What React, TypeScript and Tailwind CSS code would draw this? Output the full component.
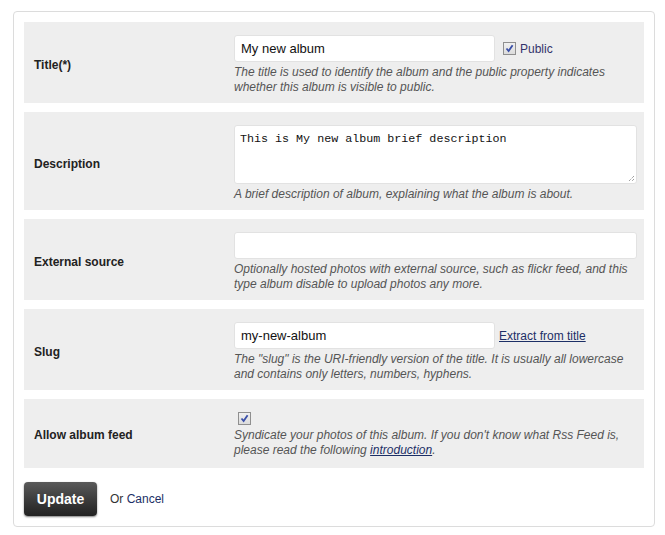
import React from "react";

function Check() {
  return (
    <span className="inline-flex h-[13px] w-[13px] shrink-0 items-center justify-center border border-[#8f8f8f] bg-gradient-to-b from-[#f0f0f0] to-[#dcdcdc]">
      <svg width="9" height="9" viewBox="0 0 9 9">
        <path d="M1.5 4.5 L3.6 7 L7.6 1.2" fill="none" stroke="#3a4fa8" strokeWidth="1.8" />
      </svg>
    </span>
  );
}

function Row({ label, children, last }: { label: string; children: React.ReactNode; last?: boolean }) {
  return (
    <div className={last ? "flex items-center bg-[#eeeeee] pt-[13px] pb-[10px]" : "flex items-center bg-[#eeeeee] pt-[13px] pb-[8px]"}>
      <div className="w-[210px] shrink-0 pl-[10px] text-[12px] font-bold text-[#222]">{label}</div>
      <div className="w-[403px]">{children}</div>
    </div>
  );
}

function Help({ children }: { children: React.ReactNode }) {
  return <div className="mt-[3px] text-[12px] italic leading-[15px] text-[#555]">{children}</div>;
}

export default function App() {
  return (
    <div className="min-h-[535px] bg-white pt-[11px] pl-[13px]" style={{ fontFamily: '"Liberation Sans", Arial, sans-serif' }}>
      <div className="w-[642px] rounded-[4px] border border-[#dcdcdc] p-[10px]">
        <div className="flex flex-col gap-[9px]">
          <Row label="Title(*)">
            <div className="flex items-center">
              <div className="flex h-[27px] w-[261px] items-center rounded-[3px] border border-[#e2e2e2] bg-white px-[6px] text-[13px] text-[#111]">
                My new album
              </div>
              <span className="ml-[8px] flex items-center gap-[4px] text-[12px] text-[#33336b]">
                <Check />
                Public
              </span>
            </div>
            <Help>
              The title is used to identify the album and the public property indicates whether this album is visible to public.
            </Help>
          </Row>
          <Row label="Description">
            <div className="relative h-[59px] w-[403px] rounded-[3px] border border-[#e2e2e2] bg-white px-[5px] pt-[5px] text-[11.7px] text-[#111]" style={{ fontFamily: '"Liberation Mono", "DejaVu Sans Mono", monospace' }}>
              This is My new album brief description
              <svg className="absolute bottom-[1px] right-[1px]" width="8" height="8" viewBox="0 0 8 8">
                <path d="M7 2 L2 7 M7 5 L5 7" stroke="#777" strokeWidth="1" strokeDasharray="1 1" />
              </svg>
            </div>
            <Help>A brief description of album, explaining what the album is about.</Help>
          </Row>
          <Row label="External source">
            <div className="h-[27px] w-[403px] rounded-[3px] border border-[#e2e2e2] bg-white"></div>
            <Help>
              Optionally hosted photos with external source, such as flickr feed, and this type album disable to upload photos any more.
            </Help>
          </Row>
          <Row label="Slug">
            <div className="flex items-center">
              <div className="flex h-[27px] w-[261px] items-center rounded-[3px] border border-[#e2e2e2] bg-white px-[6px] text-[13px] text-[#111]">
                my-new-album
              </div>
              <a className="ml-[4px] text-[12px] text-[#1c2f66] underline">Extract from title</a>
            </div>
            <Help>
              The "slug" is the URI-friendly version of the title. It is usually all lowercase and contains only letters, numbers, hyphens.
            </Help>
          </Row>
          <Row label="Allow album feed" last>
            <div className="flex h-[13px] items-center pl-[4px]">
              <Check />
            </div>
            <Help>
              Syndicate your photos of this album. If you don't know what Rss Feed is, please read the following{" "}
              <a className="text-[#1c2f66] underline">introduction</a>.
            </Help>
          </Row>
        </div>
        <div className="mt-[14px] flex items-center">
          <button className="h-[34px] w-[73px] rounded-[4px] bg-gradient-to-b from-[#5a5a5a] to-[#222] text-[14px] font-bold text-white shadow-[0_1px_2px_rgba(0,0,0,0.5)]">
            Update
          </button>
          <span className="ml-[13px] text-[12px] text-[#333]">
            Or <a className="text-[#1c2f66]">Cancel</a>
          </span>
        </div>
      </div>
    </div>
  );
}
